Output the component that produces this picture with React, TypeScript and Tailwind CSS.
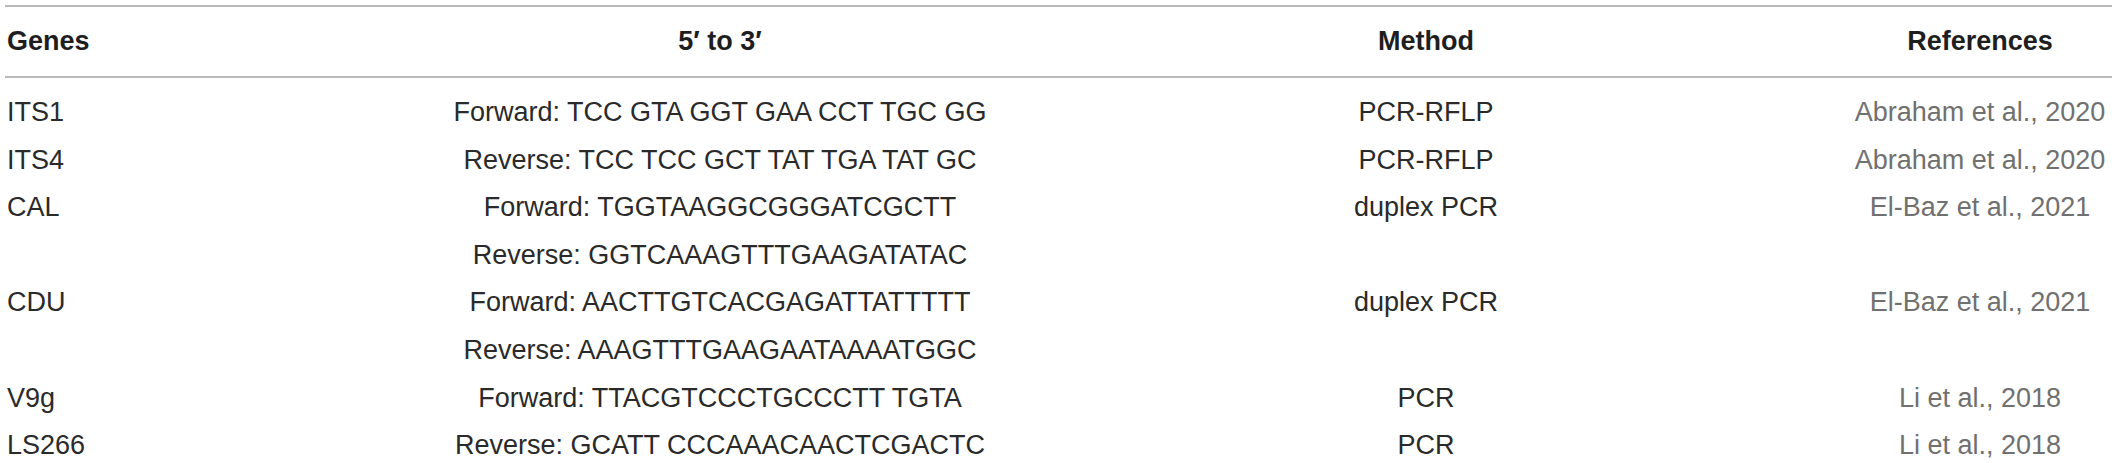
import React from "react";

type Row = { gene: string; seq: string; method: string; ref: string };

const rows: Row[] = [
  { gene: "ITS1", seq: "Forward: TCC GTA GGT GAA CCT TGC GG", method: "PCR-RFLP", ref: "Abraham et al., 2020" },
  { gene: "ITS4", seq: "Reverse: TCC TCC GCT TAT TGA TAT GC", method: "PCR-RFLP", ref: "Abraham et al., 2020" },
  { gene: "CAL", seq: "Forward: TGGTAAGGCGGGATCGCTT", method: "duplex PCR", ref: "El-Baz et al., 2021" },
  { gene: "", seq: "Reverse: GGTCAAAGTTTGAAGATATAC", method: "", ref: "" },
  { gene: "CDU", seq: "Forward: AACTTGTCACGAGATTATTTTT", method: "duplex PCR", ref: "El-Baz et al., 2021" },
  { gene: "", seq: "Reverse: AAAGTTTGAAGAATAAAATGGC", method: "", ref: "" },
  { gene: "V9g", seq: "Forward: TTACGTCCCTGCCCTT TGTA", method: "PCR", ref: "Li et al., 2018" },
  { gene: "LS266", seq: "Reverse: GCATT CCCAAACAACTCGACTC", method: "PCR", ref: "Li et al., 2018" },
];

export default function App() {
  return (
    <div className="w-[2118px] h-[463px] overflow-hidden bg-white font-['Liberation_Sans',Arial,sans-serif] text-[27px] text-[#2a2a2a]">
      <div className="ml-[5px] mt-[5px] w-[2107px]">
        <div className="h-[2px] bg-[#b9b9b9]" />
        <div className="grid grid-cols-[431px_568px_844px_264px] h-[69px] items-center font-bold text-[#1e1e1e] whitespace-nowrap">
          <div className="pl-[2px]">Genes</div>
          <div className="text-center">5′ to 3′</div>
          <div className="text-center">Method</div>
          <div className="text-center">References</div>
        </div>
        <div className="h-[2px] bg-[#b9b9b9]" />
        <div className="pt-[11px]">
          {rows.map((r, i) => (
            <div
              key={i}
              className="grid grid-cols-[431px_568px_844px_264px] h-[47.6px] leading-[47.6px] whitespace-nowrap"
            >
              <div className="pl-[2px]">{r.gene}</div>
              <div className="text-center">{r.seq}</div>
              <div className="text-center">{r.method}</div>
              <div className="text-center text-[#707070]">{r.ref}</div>
            </div>
          ))}
        </div>
      </div>
    </div>
  );
}
